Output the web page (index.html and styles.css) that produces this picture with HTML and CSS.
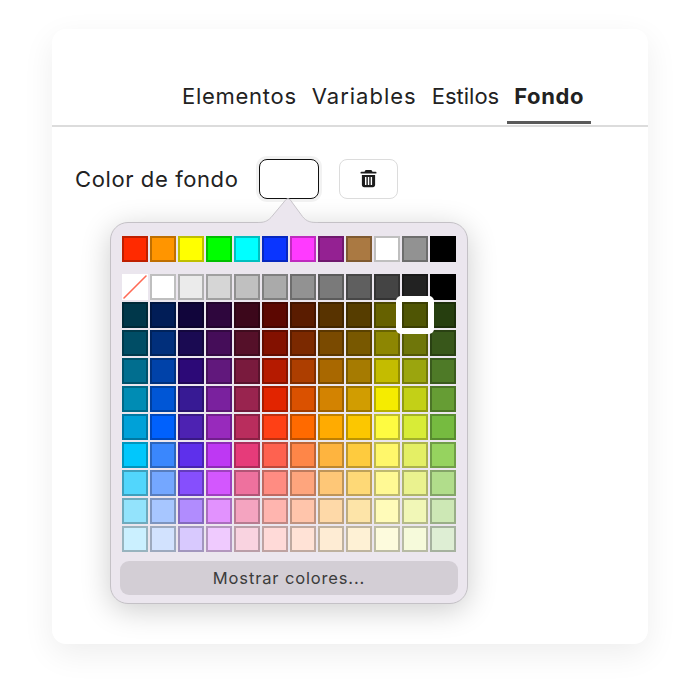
FILE: index.html
```html
<!DOCTYPE html>
<html lang="es">
<head>
<meta charset="utf-8">
<title>Color de fondo</title>
<link rel="stylesheet" href="styles.css">
</head>
<body>
<div class="card">
  <nav class="tabs">
    <a class="tab">Elementos</a>
    <a class="tab">Variables</a>
    <a class="tab">Estilos</a>
    <a class="tab active">Fondo</a>
  </nav>
  <div class="field">
    <span class="label">Color de fondo</span>
    <button class="color-btn" aria-label="Color"></button>
    <button class="del-btn" aria-label="Eliminar">
      <svg width="17" height="19" viewBox="0 0 18 20"><path fill="#1c1c1c" d="M6.4 1h5.2c.5 0 .9.3 1.1.7l.5 1.1h3.3c.6 0 1 .4 1 1s-.4 1-1 1H1.500c-.6 0-1-.4-1-1s.4-1 1-1h3.300l.5-1.100c.2-.4.6-.7 1.100-.7zM2 6.200h14v10.800c0 1.300-1 2.300-2.300 2.300H4.300C3 19.300 2 18.300 2 17zM5.300 8.500v8.300h1.500V8.500zm3 0v8.300h1.500V8.500zm3 0v8.300h1.500V8.500z"/></svg>
    </button>
  </div>

  <div class="popover">
    <svg class="arrow" width="60" height="27" viewBox="0 0 60 27"><path fill="#ebe6ee" d="M0 25.500C6 25.500 9 24.500 13 20.500L28 2.500Q30 .8 32 2.500L43 17.500C47 23.500 51 25.500 58 25.500H60V27H0z"/><path fill="none" stroke="#c9c6cb" d="M0 25.500C6 25.500 9 24.500 13 20.500L28 2.500Q30 .8 32 2.500L43 17.500C47 23.500 51 25.500 58 25.500H60"/></svg>
    <div class="row top">
      <i class="sw" style="background:#ff2a00"></i><i class="sw" style="background:#ff9500"></i><i class="sw" style="background:#ffff00"></i><i class="sw" style="background:#00ff00"></i><i class="sw" style="background:#00ffff"></i><i class="sw" style="background:#0a35ff"></i><i class="sw" style="background:#ff3aff"></i><i class="sw" style="background:#942192"></i><i class="sw" style="background:#aa7942"></i><i class="sw" style="background:#ffffff"></i><i class="sw" style="background:#929292"></i><i class="sw" style="background:#000000"></i>
    </div>
    <div class="grid">
      <i class="sw none"><svg width="26" height="26" viewBox="0 0 26 26"><path d="M2 24L24 2" stroke="#ff6a55" stroke-width="1.600" stroke-linecap="round"/></svg></i><i class="sw" style="background:#ffffff"></i><i class="sw" style="background:#ebebeb"></i><i class="sw" style="background:#d6d6d6"></i><i class="sw" style="background:#c0c0c0"></i><i class="sw" style="background:#aaaaaa"></i><i class="sw" style="background:#929292"></i><i class="sw" style="background:#7a7a7a"></i><i class="sw" style="background:#5f5f5f"></i><i class="sw" style="background:#444444"></i><i class="sw" style="background:#222222"></i><i class="sw" style="background:#000000"></i>
      <i class="sw" style="background:#00374a"></i><i class="sw" style="background:#011d57"></i><i class="sw" style="background:#11053b"></i><i class="sw" style="background:#2e063d"></i><i class="sw" style="background:#3c071b"></i><i class="sw" style="background:#5c0701"></i><i class="sw" style="background:#5a1c00"></i><i class="sw" style="background:#583300"></i><i class="sw" style="background:#563d00"></i><i class="sw" style="background:#666100"></i><i class="sw selected" style="background:#4f5504"></i><i class="sw" style="background:#263e0f"></i>
      <i class="sw" style="background:#004d65"></i><i class="sw" style="background:#012f7b"></i><i class="sw" style="background:#1a0a52"></i><i class="sw" style="background:#450d59"></i><i class="sw" style="background:#551029"></i><i class="sw" style="background:#831100"></i><i class="sw" style="background:#7b2900"></i><i class="sw" style="background:#7a4a00"></i><i class="sw" style="background:#785800"></i><i class="sw" style="background:#8d8602"></i><i class="sw" style="background:#6f760a"></i><i class="sw" style="background:#38571a"></i>
      <i class="sw" style="background:#016e8f"></i><i class="sw" style="background:#0042a9"></i><i class="sw" style="background:#2c0977"></i><i class="sw" style="background:#61187c"></i><i class="sw" style="background:#791a3d"></i><i class="sw" style="background:#b51a00"></i><i class="sw" style="background:#ad3e00"></i><i class="sw" style="background:#a96800"></i><i class="sw" style="background:#a67b01"></i><i class="sw" style="background:#c4bc00"></i><i class="sw" style="background:#9ba50e"></i><i class="sw" style="background:#4e7a27"></i>
      <i class="sw" style="background:#008cb4"></i><i class="sw" style="background:#0056d6"></i><i class="sw" style="background:#371a94"></i><i class="sw" style="background:#7a219e"></i><i class="sw" style="background:#99244f"></i><i class="sw" style="background:#e22400"></i><i class="sw" style="background:#da5100"></i><i class="sw" style="background:#d38301"></i><i class="sw" style="background:#d19d01"></i><i class="sw" style="background:#f5ec00"></i><i class="sw" style="background:#c3d017"></i><i class="sw" style="background:#669d34"></i>
      <i class="sw" style="background:#00a1d8"></i><i class="sw" style="background:#0061fd"></i><i class="sw" style="background:#4d22b2"></i><i class="sw" style="background:#982abc"></i><i class="sw" style="background:#b92d5d"></i><i class="sw" style="background:#ff4015"></i><i class="sw" style="background:#ff6a00"></i><i class="sw" style="background:#ffab01"></i><i class="sw" style="background:#fcc700"></i><i class="sw" style="background:#fefb41"></i><i class="sw" style="background:#d8ec37"></i><i class="sw" style="background:#76bb40"></i>
      <i class="sw" style="background:#01c7fc"></i><i class="sw" style="background:#3a87fd"></i><i class="sw" style="background:#5e30eb"></i><i class="sw" style="background:#be38f3"></i><i class="sw" style="background:#e63b7a"></i><i class="sw" style="background:#fe6250"></i><i class="sw" style="background:#fe8648"></i><i class="sw" style="background:#feb43f"></i><i class="sw" style="background:#fecb3e"></i><i class="sw" style="background:#fff76b"></i><i class="sw" style="background:#e4ef65"></i><i class="sw" style="background:#96d35f"></i>
      <i class="sw" style="background:#52d6fc"></i><i class="sw" style="background:#74a7ff"></i><i class="sw" style="background:#864ffd"></i><i class="sw" style="background:#d357fe"></i><i class="sw" style="background:#ee719e"></i><i class="sw" style="background:#ff8c82"></i><i class="sw" style="background:#fea57d"></i><i class="sw" style="background:#fec777"></i><i class="sw" style="background:#fed977"></i><i class="sw" style="background:#fff994"></i><i class="sw" style="background:#eaf28f"></i><i class="sw" style="background:#b1dd8b"></i>
      <i class="sw" style="background:#93e3fc"></i><i class="sw" style="background:#a7c6ff"></i><i class="sw" style="background:#b18cfe"></i><i class="sw" style="background:#e292fe"></i><i class="sw" style="background:#f4a4c0"></i><i class="sw" style="background:#ffb5af"></i><i class="sw" style="background:#ffc5ab"></i><i class="sw" style="background:#fed9a8"></i><i class="sw" style="background:#fde4a8"></i><i class="sw" style="background:#fffbb9"></i><i class="sw" style="background:#f1f7b7"></i><i class="sw" style="background:#cde8b5"></i>
      <i class="sw" style="background:#cbf0ff"></i><i class="sw" style="background:#d2e2fe"></i><i class="sw" style="background:#d8c9fe"></i><i class="sw" style="background:#efcafe"></i><i class="sw" style="background:#f9d3e0"></i><i class="sw" style="background:#ffdad8"></i><i class="sw" style="background:#ffe2d6"></i><i class="sw" style="background:#feecd4"></i><i class="sw" style="background:#fef1d5"></i><i class="sw" style="background:#fdfbdd"></i><i class="sw" style="background:#f6fadb"></i><i class="sw" style="background:#deeed4"></i>
    </div>
    <button class="more">Mostrar colores...</button>
  </div>
</div>
</body>
</html>
```
FILE: styles.css
```css
* { box-sizing: border-box; }
html, body { margin: 0; padding: 0; background: #fff; }
body { padding: 29px 30px 0 52px; height: 696px; overflow: hidden; font-family: Inter, "Noto Sans", sans-serif; color: #222; }

.card {
  position: relative;
  height: 615px;
  background: #fff;
  border-radius: 14px;
  box-shadow: 0 10px 32px rgba(0, 0, 0, .07);
}

.tabs {
  display: flex;
  padding: 47px 0 0 123px;
  border-bottom: 2px solid #dcdcdc;
  height: 98px;
}
.tab {
  height: 49px;
  padding: 0 7px;
  margin-right: 1px;
  font-size: 22px;
  line-height: 41px;
  letter-spacing: .72px;
  color: #222;
}
.tab:nth-child(2) { letter-spacing: 1px; }
.tab:nth-child(3) { letter-spacing: 0; }
.tab.active {
  font-weight: 700;
  letter-spacing: .6px;
  padding: 0 7px;
  border-bottom: 3px solid #5a5a5a;
  height: 48px;
}

.field {
  display: flex;
  align-items: center;
  margin-top: 32px;
  padding-left: 23px;
  height: 40px;
}
.label { width: 184px; font-size: 22px; letter-spacing: .6px; line-height: 38px; color: #222; }
.color-btn {
  width: 60px;
  height: 40px;
  padding: 0;
  background: #fff;
  border: 1.500px solid #111;
  border-radius: 8px;
  box-shadow: 0 0 0 3px rgba(0, 0, 0, .05);
}
.del-btn {
  display: flex;
  align-items: center;
  justify-content: center;
  width: 59px;
  height: 40px;
  margin-left: 20px;
  padding: 0 1px 1px 0;
  background: #fff;
  border: 1px solid #dcdcdc;
  border-radius: 8px;
}

.popover {
  position: absolute;
  left: 58px;
  top: 193px;
  width: 358px;
  height: 382px;
  padding: 13px 11px 0;
  background: #ebe6ee;
  border: 1px solid #c4c1c6;
  border-radius: 18px;
  box-shadow: 0 6px 30px rgba(0, 0, 0, .2);
}
.arrow { position: absolute; left: 147px; top: -26px; }
.row, .grid {
  display: grid;
  grid-template-columns: repeat(12, 26px);
  gap: 2px;
}
.grid { margin-top: 12px; }
.sw {
  display: block;
  width: 26px;
  height: 26px;
  border: 2px solid rgba(0, 0, 0, .25);
}
.sw.none { background: #fff; border: 0; }
.sw.none svg { display: block; }
.sw.selected {
  position: relative;
  z-index: 1;
}
.sw.selected::after {
  content: "";
  position: absolute;
  inset: -8px;
  border: 6px solid #fff;
  border-radius: 5px;
}
.more {
  display: block;
  width: 338px;
  height: 34px;
  margin: 9px 0 0 -2px;
  padding: 0;
  background: #d3ced5;
  border: 0;
  border-radius: 9px;
  font-family: Inter, sans-serif;
  font-size: 16.500px;
  letter-spacing: .85px;
  color: #3c3c3c;
}
```
